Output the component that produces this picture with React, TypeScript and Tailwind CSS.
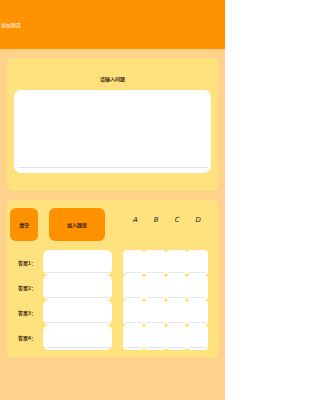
import React from "react";

const ff = { fontFamily: '"Noto Sans CJK SC", "Noto Sans", sans-serif' };

function Cell({ r = "rounded-[6px]" }: { r?: string }) {
  return (
    <div className={`h-[25px] bg-white ${r} flex flex-col justify-end px-[2px] pb-[2px]`}>
      <div className="h-px bg-[#e3e6ee]" />
    </div>
  );
}

export default function App() {
  const rows = ["答案1：", "答案2：", "答案3：", "答案4："];
  return (
    <div className="w-[225px] h-[400px] bg-[#ffd28b] flex flex-col" style={ff}>
      <div className="h-[49px] bg-[#ff9200] flex items-center pl-[1px] shrink-0">
        <span className="text-[5px] text-white leading-none">添加题目</span>
      </div>

      <div className="mx-[7px] mt-[9px] h-[133px] bg-[#ffe17e] rounded-[5px] flex flex-col items-center pt-[17px] px-[7px]">
        <div className="text-[5px] leading-none text-[#3a2a10] font-bold h-[15px] flex items-start pt-[1px]">请输入问题</div>
        <div className="w-full h-[83px] bg-white rounded-[7px] flex flex-col justify-end px-[4px] pb-[5px]">
          <div className="h-px bg-[#d9e6e6]" />
        </div>
      </div>

      <div className="mx-[7px] mt-[9px] h-[158px] bg-[#ffe17e] rounded-[5px] flex flex-col pt-[8px]">
        <div className="flex items-center h-[33px]">
          <div className="ml-[3px] w-[28px] h-[33px] bg-[#ff9100] rounded-[6px] flex items-center justify-center text-[5px] font-bold text-[#3a2000]">清空</div>
          <div className="ml-[11px] w-[56px] h-[33px] bg-[#ff9100] rounded-[6px] flex items-center justify-center text-[5px] font-bold text-[#3a2000]">加入题库</div>
          <div
            className="ml-[20px] flex w-[84px] justify-around items-center text-[7px] italic text-[#222] -mt-[8px]"
            style={{ fontFamily: '"DejaVu Sans", sans-serif' }}
          >
            <span>A</span>
            <span>B</span>
            <span>C</span>
            <span>D</span>
          </div>
        </div>

        <div className="flex mt-[9px]">
          <div className="flex flex-col w-[36px] pl-[11px]">
            {rows.map((r) => (
              <div key={r} className="h-[25px] flex items-center text-[5px] text-[#3a2a10] font-bold">
                {r}
              </div>
            ))}
          </div>
          <div className="flex flex-col w-[69px]">
            {rows.map((r) => (
              <Cell key={r} />
            ))}
          </div>
          <div className="ml-[11px] w-[85px] grid grid-cols-4">
            {Array.from({ length: 16 }).map((_, i) => (
              <Cell key={i} r="rounded-[4px]" />
            ))}
          </div>
        </div>
      </div>
    </div>
  );
}
